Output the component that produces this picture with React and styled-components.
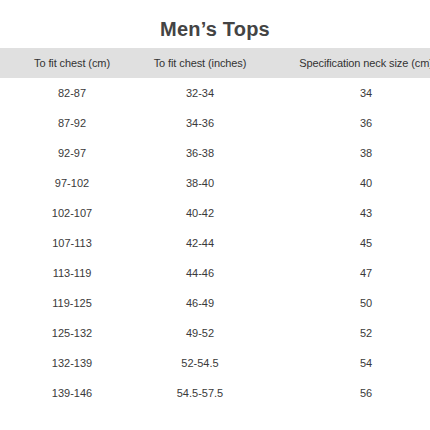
import React from 'react'
import styled, { createGlobalStyle } from 'styled-components'

const GlobalStyle = createGlobalStyle`
body {
  margin: 0;
  background: #fff;
  font-family: "Liberation Sans", Arial, sans-serif;
}
`

const Page = styled.div`
width: 430px;
height: 430px;
overflow: hidden;
background: #fff;
`

const Title = styled.h2`
margin: 0;
padding-top: 17px;
height: 48px;
box-sizing: border-box;
text-align: center;
font-size: 20px;
line-height: 24px;
font-weight: 700;
color: #444;
letter-spacing: 0.2px;
`

const Scroller = styled.div`
width: 430px;
overflow: hidden;
`

const Table = styled.table`
border-collapse: collapse;
table-layout: fixed;
width: 460px;
margin-left: 8px;
`

const HeadRow = styled.tr`
background: #e0e0e0;
box-shadow: -8px 0 0 #e0e0e0;
`

const Head = styled.th`
width: ${p => p.w}px;
height: 30px;
padding: 0;
background: #e0e0e0;
color: #333;
font-size: 11px;
font-weight: 400;
letter-spacing: -0.1px;
white-space: nowrap;
text-align: center;
`

const Cell = styled.td`
height: 30px;
padding: 0;
text-align: center;
font-size: 11px;
color: #3a3a3a;
white-space: nowrap;
`

const rows = [
  ['82-87', '32-34', '34'],
  ['87-92', '34-36', '36'],
  ['92-97', '36-38', '38'],
  ['97-102', '38-40', '40'],
  ['102-107', '40-42', '43'],
  ['107-113', '42-44', '45'],
  ['113-119', '44-46', '47'],
  ['119-125', '46-49', '50'],
  ['125-132', '49-52', '52'],
  ['132-139', '52-54.5', '54'],
  ['139-146', '54.5-57.5', '56'],
]

export default function App() {
  return (
    <Page>
      <GlobalStyle />
      <Title>Men’s Tops</Title>
      <Scroller>
        <Table>
          <thead>
            <HeadRow>
              <Head w={128}>To fit chest (cm)</Head>
              <Head w={128}>To fit chest (inches)</Head>
              <Head w={204}>Specification neck size (cm)</Head>
            </HeadRow>
          </thead>
          <tbody>
            {rows.map(r => (
              <tr key={r[0]}>
                {r.map((v, i) => <Cell key={i}>{v}</Cell>)}
              </tr>
            ))}
          </tbody>
        </Table>
      </Scroller>
    </Page>
  )
}
